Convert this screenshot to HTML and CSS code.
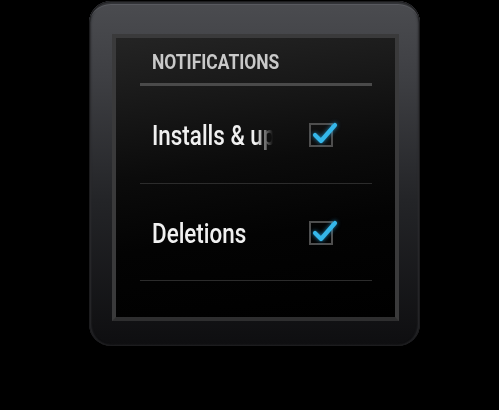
FILE: index.html
```html
<!DOCTYPE html>
<html>
<head>
<meta charset="utf-8">
<link rel="stylesheet" href="styles.css">
</head>
<body>
<div class="watch">
  <div class="screen">
    <div class="list">
      <div class="header"><span class="cond">NOTIFICATIONS</span></div>
      <div class="row">
        <div class="title fade"><span class="cond">Installs &amp; updates</span></div>
        <div class="checkbox">
          <svg class="check" width="34" height="26" viewBox="0 0 34 26"><path d="M6 14 L12 20 L26 4" fill="none" stroke="#35b7ea" stroke-width="4.2" stroke-linecap="round" stroke-linejoin="round"/></svg>
        </div>
      </div>
      <div class="row">
        <div class="title"><span class="cond">Deletions</span></div>
        <div class="checkbox">
          <svg class="check" width="34" height="26" viewBox="0 0 34 26"><path d="M6 14 L12 20 L26 4" fill="none" stroke="#35b7ea" stroke-width="4.2" stroke-linecap="round" stroke-linejoin="round"/></svg>
        </div>
      </div>
    </div>
  </div>
</div>
</body>
</html>
```

FILE: styles.css
```css
html, body {
  margin: 0;
  padding: 0;
  background: #000;
  width: 499px;
  height: 410px;
  overflow: hidden;
  font-family: Roboto, "Liberation Sans", sans-serif;
}

.watch {
  margin: 1px 0 0 89px;
  width: 331px;
  height: 345px;
  box-sizing: border-box;
  padding: 33px 0 0 23px;
  border-radius: 22px;
  background: linear-gradient(to bottom, #4b4c50 0%, #3e3f43 22%, #232427 58%, #0e0e10 100%);
  box-shadow:
    inset 0 0 0 1px #1c1c1e,
    inset 0 4px 1px -1px #2e2f32,
    inset 0 5px 0 -1px #5e5f64,
    inset 3px 0 2px -1px #2a2b2e,
    inset -3px 0 2px -1px #2a2b2e,
    inset 0 -2px 2px -1px #252527;
}

.screen {
  width: 279px;
  height: 279px;
  border: 4px solid #3a3a3b;
  border-bottom-color: #2e2e2f;
  background: linear-gradient(172deg, #242424 0%, #181818 22%, #0b0b0b 45%, #030303 68%, #000 100%);
}

.list {
  margin-left: 24px;
  width: 232px;
  padding-top: 14px;
}

.header {
  height: 21px;
  line-height: 21px;
  font-size: 21px;
  font-weight: bold;
  color: #c9c9c9;
  padding: 0 0 10px 12px;
  border-bottom: 3px solid #4a4a4a;
}

.cond {
  display: inline-block;
  white-space: nowrap;
  transform: scaleX(0.83);
  transform-origin: 0 50%;
}

.row {
  height: 97px;
  display: flex;
  align-items: center;
  padding-left: 12px;
  border-bottom: 1px solid #2c2c2c;
}

.row + .row {
  height: 96px;
}

.title {
  width: 121px;
  margin: 4px 36px 0 0;
  font-size: 27px;
  font-weight: 500;
  line-height: 27px;
  height: 27px;
  color: #f0f0f0;
}

.fade {
  overflow: hidden;
  -webkit-mask-image: linear-gradient(to right, #000 104px, transparent 121px);
  mask-image: linear-gradient(to right, #000 104px, transparent 121px);
}

.checkbox {
  position: relative;
  width: 20px;
  height: 20px;
  border: 2px solid #4e4e4e;
  margin-top: 1px;
}

.check {
  position: absolute;
  left: -2px;
  top: -4px;
  filter: drop-shadow(0 0 2px rgba(40, 170, 230, 0.75));
}
```
